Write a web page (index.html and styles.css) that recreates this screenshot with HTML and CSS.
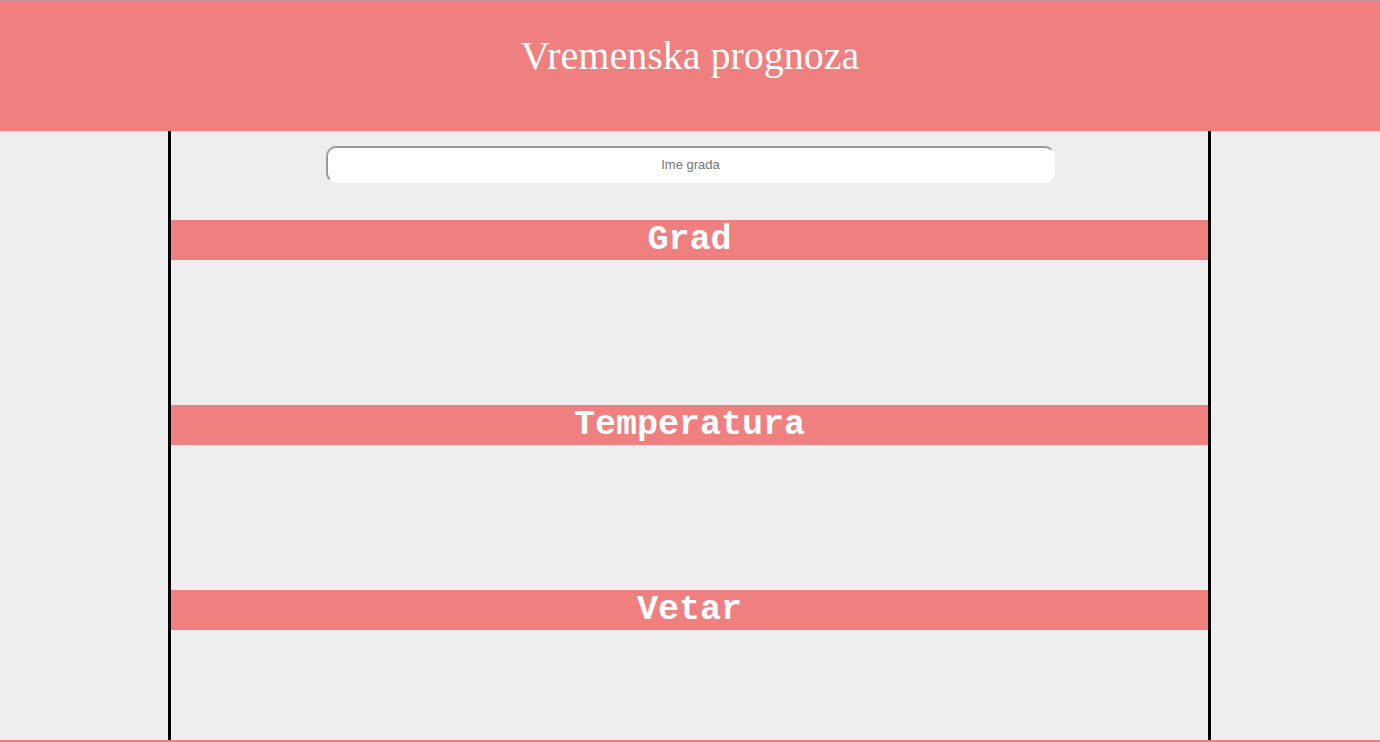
FILE: index.html
```html
<!DOCTYPE html>
<html lang="sr">
<head>
<meta charset="utf-8">
<title>Vremenska prognoza</title>
<link rel="stylesheet" href="styles.css">
</head>
<body>
<header class="site-header">
  <h1 class="site-title">Vremenska prognoza</h1>
</header>
<main class="container">
  <form class="search">
    <input class="search-input" type="text" placeholder="Ime grada">
  </form>
  <section class="panel">
    <h2 class="panel-title">Grad</h2>
    <div class="panel-body"></div>
  </section>
  <section class="panel">
    <h2 class="panel-title">Temperatura</h2>
    <div class="panel-body"></div>
  </section>
  <section class="panel">
    <h2 class="panel-title">Vetar</h2>
    <div class="panel-body"></div>
  </section>
</main>
<footer class="site-footer"></footer>
</body>
</html>
```
FILE: styles.css
```css
html, body {
  margin: 0;
  padding: 0;
}
body {
  background: #eeeeee;
  font-family: "Liberation Serif", "Times New Roman", serif;
}
.site-header {
  background: #f08080;
  border-top: 1px solid #c8959a;
  height: 130px;
  box-sizing: content-box;
}
.site-title {
  margin: 0;
  padding-top: 32px;
  text-align: center;
  color: #ffffff;
  font-family: "Liberation Serif", "Times New Roman", serif;
  font-weight: normal;
  font-size: 40px;
  line-height: 46px;
}
.container {
  width: 1037px;
  margin: 0 calc(50% - 521px) 0 calc(50% - 522px);
  border-left: 3px solid #000;
  border-right: 3px solid #000;
  height: 594px;
  padding-top: 15px;
}
.search {
  margin: 0 0 37px;
  padding-left: 2px;
}
.search-input {
  display: block;
  margin: 0 auto;
  box-sizing: border-box;
  width: 729px;
  height: 37px;
  border-style: solid;
  border-width: 2px;
  border-color: #9a9a9a #ffffff #ffffff #9a9a9a;
  border-radius: 10px;
  background: #ffffff;
  text-align: center;
  font-family: "Liberation Sans", Arial, sans-serif;
  font-size: 13px;
  outline: none;
}
.search-input::placeholder {
  color: #757575;
}
.panel-title {
  margin: 0;
  background: #f08080;
  color: #ffffff;
  text-align: center;
  font-family: "Courier New", "Nimbus Mono PS", "FreeMono", "Liberation Mono", monospace;
  font-weight: bold;
  font-size: 35px;
  line-height: 40px;
  height: 40px;
}
.panel-body {
  height: 145px;
}
.site-footer {
  background: #f08080;
  height: 2px;
}
```
